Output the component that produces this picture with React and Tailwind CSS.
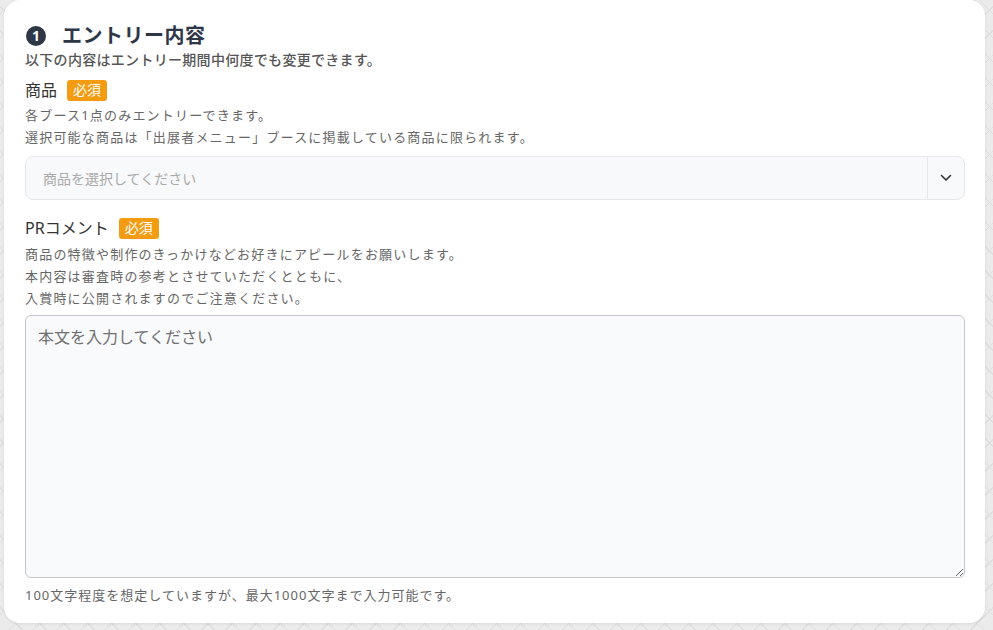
import React from 'react';

const Required = () => (
    <span className="inline-flex items-center h-[21px] px-[6px] rounded-[3px] bg-[#f39c12] text-white text-[14px] leading-none">
        必須
    </span>
);

const Desc = ({ children }) => (
    <p className="text-[13px] leading-[22px] tracking-[1.2px] text-[#666]">{children}</p>
);

export default function App() {
    return (
        <div className="min-h-[630px] bg-[#ebebeb] bg-[repeating-linear-gradient(45deg,transparent_0_16px,#dedede_16px_17px),repeating-linear-gradient(-45deg,transparent_0_16px,#dedede_16px_17px)] pl-[4px] pr-[8px] pb-[8px] font-['Noto_Sans','Noto_Sans_CJK_JP',sans-serif]">
            <div className="bg-white rounded-2xl shadow-[0_1px_3px_rgba(0,0,0,0.08)] pt-[22px] pb-[17px] pl-[21px] pr-[20px]">
                {/* Section heading */}
                <div className="flex items-center h-7">
                    <span className="flex items-center justify-center w-[20px] h-[20px] ml-[1px] rounded-full bg-[#2d3748] text-white text-[14px] font-bold leading-none">
                        1
                    </span>
                    <h2 className="ml-[16px] text-[20px] tracking-[0.5px] font-bold text-[#2d3748] leading-7">エントリー内容</h2>
                </div>
                <p className="text-[14px] leading-5 tracking-[0.3px] font-medium text-[#555]">
                    以下の内容はエントリー期間中何度でも変更できます。
                </p>

                {/* 商品 */}
                <div className="flex items-center gap-[10px] mt-2 h-6">
                    <span className="text-[16px] text-[#333]">商品</span>
                    <Required />
                </div>
                <div className="mt-[2px]">
                    <Desc>各ブース1点のみエントリーできます。</Desc>
                    <Desc>選択可能な商品は「出展者メニュー」ブースに掲載している商品に限られます。</Desc>
                </div>
                <div className="flex mt-2 h-[44px] rounded-lg border border-[#e6e8eb] bg-[#f8f9fa]">
                    <div className="flex-1 flex items-center pl-[17px] text-[14px] text-[#a9a9a9]">
                        商品を選択してください
                    </div>
                    <div className="w-[37px] flex items-center justify-center border-l border-[#e6e8eb]">
                        <svg width="12" height="8" viewBox="0 0 12 8" fill="none">
                            <path d="M1.5 1.5L6 6L10.5 1.5" stroke="#333" strokeWidth="1.6" strokeLinecap="round" strokeLinejoin="round" />
                        </svg>
                    </div>
                </div>

                {/* PRコメント */}
                <div className="flex items-center gap-[10px] mt-4 h-6">
                    <span className="text-[16px] text-[#333]">PRコメント</span>
                    <Required />
                </div>
                <div className="mt-[3px]">
                    <Desc>商品の特徴や制作のきっかけなどお好きにアピールをお願いします。</Desc>
                    <Desc>本内容は審査時の参考とさせていただくとともに、</Desc>
                    <Desc>入賞時に公開されますのでご注意ください。</Desc>
                </div>
                <textarea
                    placeholder="本文を入力してください"
                    className="block w-full mt-[6px] h-[263px] rounded-md border border-[#c3c7cc] bg-[#f8fafc] px-[12px] pt-[9px] text-[16px] leading-6 text-[#333] placeholder:text-[#707070] resize-y outline-none"
                />
                <p className="mt-[6px] text-[13px] leading-[22px] tracking-[1px] text-[#666]">
                    100文字程度を想定していますが、最大1000文字まで入力可能です。
                </p>
            </div>
        </div>
    );
}
